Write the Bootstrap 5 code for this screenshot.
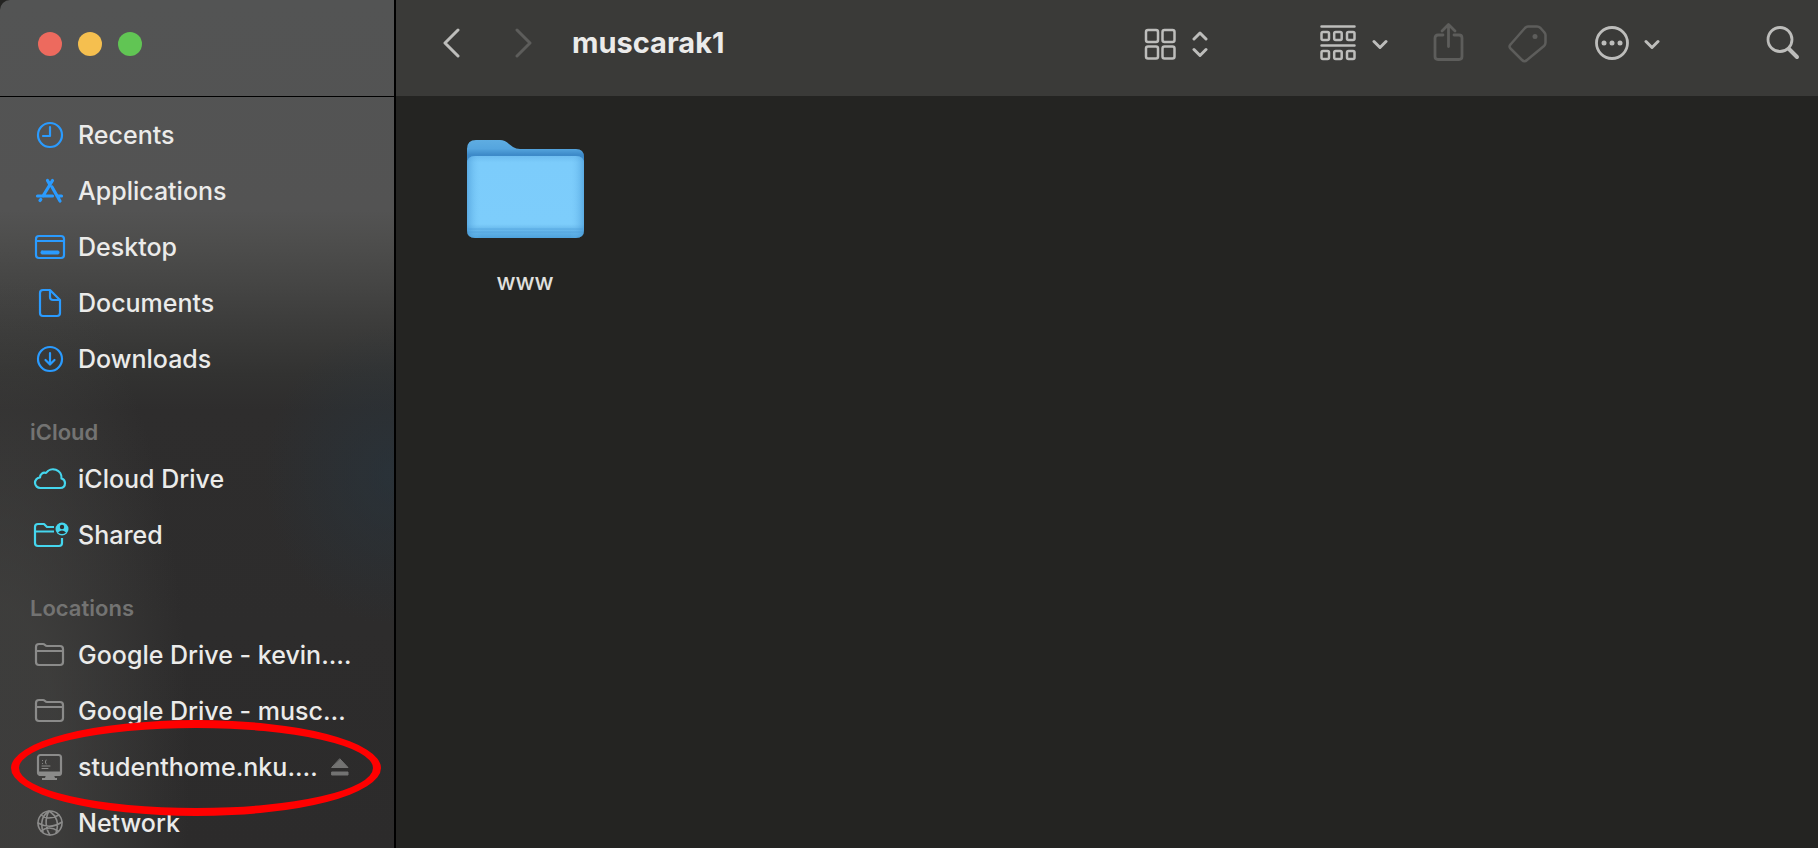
<!DOCTYPE html>
<html lang="en">
<head>
<meta charset="utf-8">
<meta name="viewport" content="width=device-width, initial-scale=1">
<title>muscarak1</title>
<link href="https://cdn.jsdelivr.net/npm/bootstrap@5.3.0/dist/css/bootstrap.min.css" rel="stylesheet">
<style>
body { font-family: Inter, "Liberation Sans", sans-serif; background: #242422; color: #ebebea; }
svg { display: block; flex: none; fill: none; stroke: currentColor; stroke-linecap: round; stroke-linejoin: round; }
.sidebar {
  width: 396px; border-right: 2px solid #000; border-top-left-radius: 10px;
  background:
    radial-gradient(ellipse 130px 150px at 100% 475px, rgba(38,54,66,.55), transparent),
    radial-gradient(ellipse 190px 520px at 0 760px, rgba(72,72,70,.6) 30%, transparent),
    linear-gradient(#535454 0, #535353 210px, #4e4e4d 240px, #454544 285px, #3b3b3a 330px, #323231 375px, #2e2d2d 410px, #2c2b2b 100%);
}
.bar { height: 96px; padding-bottom: 9px; }
.sidebar .bar { height: 97px; padding-left: 38px; gap: 16px; border-bottom: 1px solid #000; }
.light { width: 24px; height: 24px; border: 0; padding: 0; border-radius: 50%; }
.close-light { background: #ed6a5e; } .min-light { background: #f5bf4f; } .max-light { background: #61c554; }
.places { padding-top: 10px; }
.place { height: 56px; padding-left: 32px; gap: 10px; font-size: 25px; line-height: 32px; font-weight: 500; color: inherit; text-decoration: none; white-space: nowrap; }
.place svg { width: 36px; height: 36px; stroke-width: 2.2; }
.place .heavy { stroke-width: 3.2; } .place .fine { stroke-width: 1.6; }
.section-title { margin: 0; padding: 29px 0 3px 30px; font-size: 22px; line-height: 32px; font-weight: 600; color: #737372; }
.blue { color: #2a9bff; } .cyan { color: #45d6ee; } .dim { color: #8b8b8a; }
.tool { border: 0; padding: 0; background: none; color: #bdbdbb; gap: 14px; }
.tool:disabled { color: #5d5d5b; }
.eject { margin-right: 44px; color: #737372; }
.ring { position: absolute; left: 11px; right: 13px; top: -19px; height: 96px; border: 8px solid #f00; border-radius: 50%; pointer-events: none; z-index: 2; }
.toolbar { background: #3a3a38; padding: 0 18px 10px 46px; }
.forward { margin-left: 55px; }
.window-title { margin: 0 0 0 39px; font-size: 29px; line-height: 36px; font-weight: 700; }
.files { padding: 41px 59px; }
.file { width: 140px; font-size: 23px; line-height: 34px; font-weight: 500; color: #e0e0df; text-decoration: none; }
.folder { stroke: none; }
.tools { gap: 44px; }
.after-view { margin-right: 68px; } .after-more { margin-right: 62px; }
</style>
</head>
<body>
<div class="d-flex vh-100 overflow-hidden">
  <aside class="sidebar flex-shrink-0 overflow-hidden">
    <div class="bar d-flex align-items-center">
      <button class="light close-light" aria-label="Close"></button>
      <button class="light min-light" aria-label="Minimize"></button>
      <button class="light max-light" aria-label="Zoom"></button>
    </div>
    <nav class="places" aria-label="Places">
      <a href="#" class="place d-flex align-items-center"><svg class="blue" viewBox="0 0 36 36"><circle cx="18" cy="18" r="12"/><path d="M18 10v9h-7"/></svg>Recents</a>
      <a href="#" class="place d-flex align-items-center"><svg class="blue heavy" viewBox="0 0 36 36"><path d="M15.500 7.500l2 3.500M20.500 7.500l-9.500 15.500M5.500 23h15M20 14l8 14M25 23h4.500M8 27.500l.8-1"/></svg>Applications</a>
      <a href="#" class="place d-flex align-items-center"><svg class="blue" viewBox="0 0 36 36"><rect x="4" y="7" width="28" height="22" rx="3"/><path d="M4 12h28"/><rect x="9" y="22" width="18" height="3" rx="1" fill="currentColor" stroke-width="1"/></svg>Desktop</a>
      <a href="#" class="place d-flex align-items-center"><svg class="blue" viewBox="0 0 36 36"><path d="M18 5h-7q-3 0-3 3v20q0 3 3 3h14q3 0 3-3v-13zM18 5v7q0 3 3 3h7"/></svg>Documents</a>
      <a href="#" class="place d-flex align-items-center"><svg class="blue" viewBox="0 0 36 36"><circle cx="18" cy="18" r="12"/><path d="M18 12v11M13.500 19l4.500 4.500 4.500-4.500"/></svg>Downloads</a>
      <h2 class="section-title">iCloud</h2>
      <a href="#" class="place d-flex align-items-center"><svg class="cyan" viewBox="0 0 36 36"><path d="M8.500 27a5 5 0 0 1-.5-10.500c0-3.500 3-5.500 6-4.500a8.500 8.500 0 0 1 15.500 5.500c2.500.8 3.500 2.500 3.500 4.500 0 3-2 5-5 5z"/></svg>iCloud Drive</a>
      <a href="#" class="place d-flex align-items-center"><svg class="cyan" viewBox="0 0 36 36" overflow="visible"><path d="M22 10h-7l-3-3H6q-3 0-3 3v16q0 3 3 3h21q3 0 3-3v-5M3 14.500h19" stroke-linecap="butt"/><circle cx="30" cy="12" r="6.500" fill="currentColor" stroke="none"/><circle cx="30" cy="10" r="2.200" fill="#2f2f2f" stroke="none"/><path d="M26 15.500q4-4 8 0q-4 3-8 0z" fill="#2f2f2f" stroke="none"/></svg>Shared</a>
      <h2 class="section-title">Locations</h2>
      <a href="#" class="place d-flex align-items-center"><svg class="dim" viewBox="0 0 36 36"><path d="M4 10q0-3 3-3h4q1 0 2 1t2 1h13q3 0 3 3v13q0 3-3 3H7q-3 0-3-3zM4 14h27"/></svg>Google Drive - kevin.…</a>
      <a href="#" class="place d-flex align-items-center"><svg class="dim" viewBox="0 0 36 36"><path d="M4 10q0-3 3-3h4q1 0 2 1t2 1h13q3 0 3 3v13q0 3-3 3H7q-3 0-3-3zM4 14h27"/></svg>Google Drive - musc…</a>
      <div class="position-relative d-flex align-items-center">
        <a href="#" class="place flex-grow-1 d-flex align-items-center"><svg class="dim" viewBox="0 0 36 36"><rect x="6" y="6" width="23" height="20" rx="2.500"/><path d="M6 23h23v1.500q0 2-2 2H8q-2 0-2-2z" fill="currentColor" stroke-width="1"/><path d="M14 26h8l1 3h2v2H10v-2h3z" fill="currentColor" stroke="none"/><path d="M10.500 11.500v.2M10.500 14.500v.2M14 11q-1.500 2 0 4M10 17h8M10 19.500h6" stroke-width="1"/></svg>studenthome.nku.…</a>
        <button class="tool eject" aria-label="Eject"><svg width="20" height="20" viewBox="0 0 20 20" fill="currentColor"><path d="M10 2l8 8.500H2zM2 15h16v3H2z" fill="currentColor"/></svg></button>
        <span class="ring"></span>
      </div>
      <a href="#" class="place d-flex align-items-center"><svg class="dim fine" viewBox="0 0 36 36"><circle cx="18" cy="18" r="12"/><path d="M17 6c-4 7-4 17 1 24M17 6c8 5 10 13 7 22M17 6c-6 4-9 11-6 21M9 10q7 6 18 0M6 18q12 7 24-1M9 26q8-6 17 0"/></svg>Network</a>
    </nav>
  </aside>
  <main class="flex-grow-1">
    <header class="bar toolbar d-flex align-items-center">
      <button class="tool" aria-label="Back"><svg width="18" height="32" viewBox="0 0 18 32" stroke-width="3"><path d="M16 3L3 16l13 13"/></svg></button>
      <button class="tool forward" disabled aria-label="Forward"><svg width="18" height="32" viewBox="0 0 18 32" stroke-width="3"><path d="M2 3l13 13L2 29"/></svg></button>
      <h1 class="window-title">muscarak1</h1>
      <div class="tools d-flex align-items-center ms-auto">
        <button class="tool after-view d-flex align-items-center" aria-label="View as icons"><svg width="34" height="36" viewBox="0 0 34 36" stroke-width="2.500"><rect x="2" y="5" width="12" height="12" rx="2"/><rect x="18.500" y="5" width="12" height="12" rx="2"/><rect x="2" y="21.500" width="12" height="12" rx="2"/><rect x="18.500" y="21.500" width="12" height="12" rx="2"/></svg><svg width="16" height="36" viewBox="0 0 16 36" stroke-width="3"><path d="M2 14l6-6 6 6M2 24.500l6 6 6-6"/></svg></button>
        <button class="tool d-flex align-items-center" aria-label="Group items"><svg width="38" height="40" viewBox="0 0 38 40" stroke-width="2.500"><path d="M1.500 3.500h33M1.500 22.500h33"/><rect x="1.500" y="9" width="7.500" height="8" rx="1.500"/><rect x="14.200" y="9" width="7.500" height="8" rx="1.500"/><rect x="27" y="9" width="7.500" height="8" rx="1.500"/><rect x="1.500" y="28" width="7.500" height="8" rx="1.500"/><rect x="14.200" y="28" width="7.500" height="8" rx="1.500"/><rect x="27" y="28" width="7.500" height="8" rx="1.500"/></svg><svg width="16" height="36" viewBox="0 0 16 36" stroke-width="3"><path d="M2 16.500l6 6 6-6"/></svg></button>
        <button class="tool" disabled aria-label="Share"><svg width="32" height="44" viewBox="0 0 32 44" stroke-width="2.800"><path d="M11 14H6q-3 0-3 3v18.500q0 3 3 3h21q3 0 3-3V17q0-3-3-3h-5M16.500 25.500V4M10 10l6.500-6.500L23 10"/></svg></button>
        <button class="tool" disabled aria-label="Tags"><svg width="42" height="42" viewBox="0 0 42 42" stroke-width="2.500"><path d="M20 4.500h9q2 0 3.500 1.500l3.500 4q1.500 1.500 1.500 3V20.500q0 2-1.500 3.500L19 38q-2.500 2.500-5 0L2.500 26.500q-2-2 0-4L16.500 6.500q1.500-2 3.500-2z"/><circle cx="27" cy="14.500" r="2.500" fill="currentColor" stroke="none"/></svg></button>
        <button class="tool after-more d-flex align-items-center" aria-label="More"><svg width="36" height="36" viewBox="0 0 36 36" stroke-width="2.800"><circle cx="18" cy="18" r="15.500"/><g fill="currentColor" stroke="none"><circle cx="10" cy="18" r="2.500"/><circle cx="18" cy="18" r="2.500"/><circle cx="26" cy="18" r="2.500"/></g></svg><svg width="16" height="36" viewBox="0 0 16 36" stroke-width="3"><path d="M2 16.500l6 6 6-6"/></svg></button>
        <button class="tool" aria-label="Search"><svg width="34" height="36" viewBox="0 0 34 36" stroke-width="2.800"><circle cx="14" cy="14.500" r="12"/><path d="M23 24l8 8" stroke-width="4"/></svg></button>
      </div>
    </header>
    <section class="files">
      <a href="#" class="file d-flex flex-column align-items-center">
        <svg class="folder" width="120" height="104" viewBox="0 0 120 104">
          <defs>
            <linearGradient id="back" x1="0" y1="0" x2="0" y2="1"><stop offset="0" stop-color="#5fade2"/><stop offset=".1" stop-color="#55a5de"/><stop offset=".17" stop-color="#3d8ac9"/><stop offset="1" stop-color="#3f8fce"/></linearGradient>
            <linearGradient id="front" x1="0" y1="0" x2="0" y2="1"><stop offset="0" stop-color="#6ebdf0"/><stop offset=".08" stop-color="#7cccfb"/><stop offset=".83" stop-color="#7dcdfb"/><stop offset=".88" stop-color="#6dbdef"/><stop offset="1" stop-color="#4ea2dc"/></linearGradient>
            <linearGradient id="edges"><stop offset="0" stop-color="#3f90d0" stop-opacity=".55"/><stop offset=".12" stop-color="#7dcdfb" stop-opacity="0"/><stop offset=".88" stop-color="#7dcdfb" stop-opacity="0"/><stop offset="1" stop-color="#3f90d0" stop-opacity=".55"/></linearGradient>
          </defs>
          <path d="M2 12Q2 3 11 3h24q5 0 9 4l4 3q3 2 7 2h56q8 0 8 8v70H2z" fill="url(#back)"/>
          <path d="M2 27q0-8 8-8h101q8 0 8 8v66q0 8-8 8H10q-8 0-8-8z" fill="url(#front)"/>
          <path d="M2 27q0-8 8-8h101q8 0 8 8v66q0 8-8 8H10q-8 0-8-8z" fill="url(#edges)"/>
          <path d="M3 92h115M3 95h115" stroke="#4e9fd8" stroke-width="1" stroke-opacity=".6"/>
        </svg>
        <span class="mt-4">www</span>
      </a>
    </section>
  </main>
</div>
<script src="https://cdn.jsdelivr.net/npm/bootstrap@5.3.0/dist/js/bootstrap.bundle.min.js"></script>
</body>
</html>
